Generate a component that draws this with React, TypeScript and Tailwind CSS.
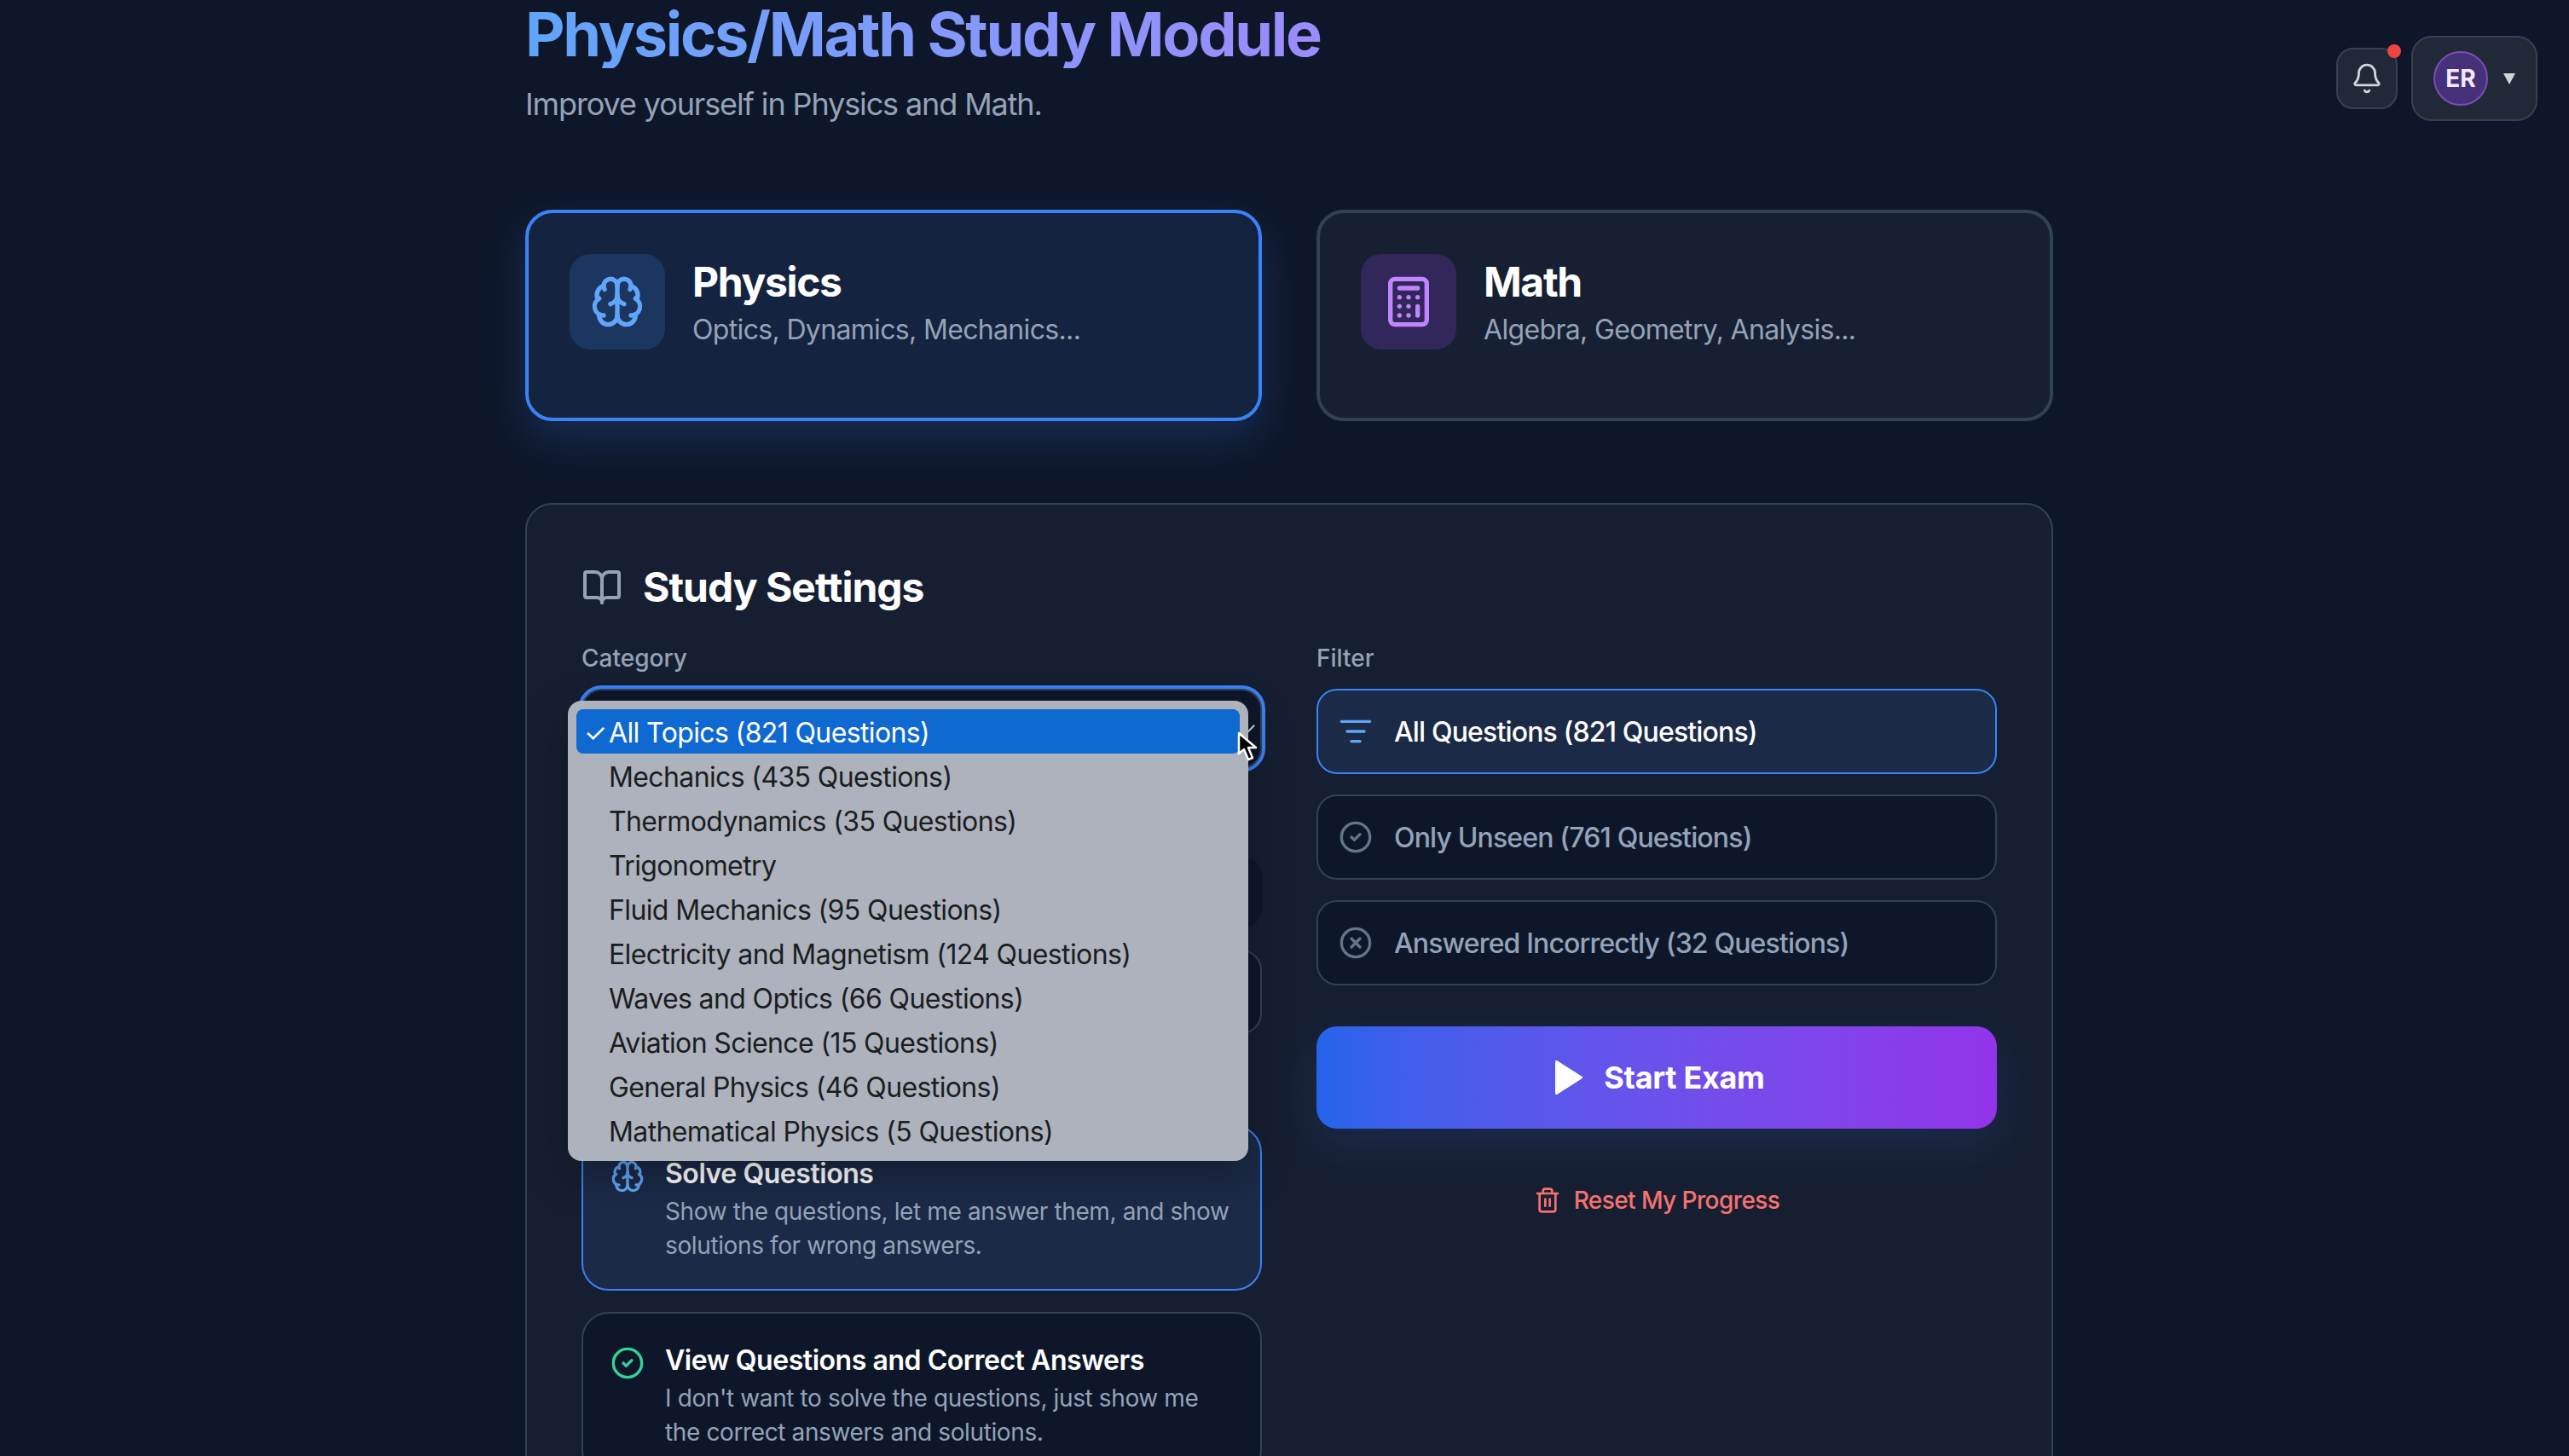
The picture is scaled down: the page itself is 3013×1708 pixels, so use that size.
import { Bell, Brain, BookOpen, Calculator, CircleCheck, CircleX, ListFilter, Trash2 } from "lucide-react";

const topics = [
  "All Topics (821 Questions)",
  "Mechanics (435 Questions)",
  "Thermodynamics (35 Questions)",
  "Trigonometry",
  "Fluid Mechanics (95 Questions)",
  "Electricity and Magnetism (124 Questions)",
  "Waves and Optics (66 Questions)",
  "Aviation Science (15 Questions)",
  "General Physics (46 Questions)",
  "Mathematical Physics (5 Questions)",
];

const filters = [
  { label: "All Questions (821 Questions)", icon: ListFilter, active: true },
  { label: "Only Unseen (761 Questions)", icon: CircleCheck, active: false },
  { label: "Answered Incorrectly (32 Questions)", icon: CircleX, active: false },
];

function SelectMenu() {
  return (
    <div className="absolute left-[-16px] top-[14px] z-20 w-[798px] rounded-[16px] bg-[#adb2bd] p-[10px] text-[32px] leading-[52px] tracking-[-0.62px] text-[#1c1d20] shadow-[0_16px_48px_rgba(0,0,0,0.3)]">
      {topics.map((topic, idx) => (
        <div
          key={topic}
          className={idx === 0 ? "relative h-[52px] rounded-[8px] bg-[#0f69d1] pl-[38px] pt-[2px] text-white" : "h-[52px] pl-[38px] pt-[2px]"}
        >
          {idx === 0 && <span className="absolute left-[9px] top-[2px] text-[30px]">✓</span>}
          {topic}
        </div>
      ))}
    </div>
  );
}

function Cursor() {
  return (
    <svg className="absolute left-[769px] top-[50px] z-30" width="26" height="36" viewBox="0 0 26 36">
      <path d="M2 2 L2 26 L8 21 L13 33 L18 31 L13 19 L22 19 Z" fill="#000" stroke="#fff" strokeWidth="2.5" strokeLinejoin="round" />
    </svg>
  );
}

export default function App() {
  return (
    <div className="relative h-screen overflow-hidden bg-[#0e172a] font-['Inter',sans-serif] text-white">
      <div className="absolute right-[37px] top-[42px] flex items-center gap-[16px]">
        <div className="relative flex h-[72px] w-[72px] items-center justify-center rounded-[20px] border-2 border-[#374151] bg-[#1f2937]">
          <Bell size={38} strokeWidth={1.8} className="text-[#d1d5db]" />
          <span className="absolute right-[-6px] top-[-6px] h-[16px] w-[16px] rounded-full bg-[#ef4444]" />
        </div>
        <div className="flex h-[100px] w-[148px] items-center gap-[18px] rounded-[24px] border-2 border-[#374151] bg-[#1f2937] pl-[24px]">
          <div className="flex h-[64px] w-[64px] items-center justify-center rounded-full border-2 border-[#7c4fb0] bg-[#45307a] text-[28px] font-bold text-[#f3e8ff]">
            ER
          </div>
          <span className="h-0 w-0 border-x-[7px] border-t-[13px] border-x-transparent border-t-[#d1d5db]" />
        </div>
      </div>

      <div className="ml-[616px] w-[1792px]">
        <h1 className="w-fit bg-gradient-to-r from-[#60a5fa] to-[#9b8cfb] bg-clip-text text-[72px] font-bold leading-[80px] tracking-[-2.3px] text-transparent">
          Physics/Math Study Module
        </h1>
        <p className="mt-[14px] text-[36px] leading-[56px] tracking-[-1.12px] text-[#94a3b8]">Improve yourself in Physics and Math.</p>

        <div className="mt-[96px] grid grid-cols-2 gap-[64px]">
          <div className="flex h-[248px] gap-[32px] rounded-[32px] border-4 border-[#3b82f6] bg-[#14233f] p-[48px] shadow-[0_20px_50px_rgba(59,130,246,0.2)]">
            <div className="flex h-[112px] w-[112px] items-center justify-center rounded-[24px] bg-[#1b365f]">
              <Brain size={64} className="text-[#60a5fa]" />
            </div>
            <div className="mt-[1px]">
              <p className="text-[48px] font-bold leading-[64px] tracking-[-1.35px]">Physics</p>
              <p className="text-[32px] leading-[48px] tracking-[-0.66px] text-[#94a3b8]">Optics, Dynamics, Mechanics...</p>
            </div>
          </div>
          <div className="flex h-[248px] gap-[32px] rounded-[32px] border-4 border-[#334155] bg-[#172033] p-[48px]">
            <div className="flex h-[112px] w-[112px] items-center justify-center rounded-[24px] bg-[#32275a]">
              <Calculator size={64} className="text-[#c084fc]" />
            </div>
            <div className="mt-[1px]">
              <p className="text-[48px] font-bold leading-[64px] tracking-[-1.35px]">Math</p>
              <p className="text-[32px] leading-[48px] tracking-[-0.66px] text-[#94a3b8]">Algebra, Geometry, Analysis...</p>
            </div>
          </div>
        </div>

        <section className="mt-[96px] rounded-[32px] border-2 border-[#334155] bg-[#161f32] p-[64px]">
          <div className="mt-[5px] flex items-center gap-[24px]">
            <BookOpen size={48} className="text-[#94a3b8]" />
            <h2 className="text-[48px] font-bold leading-[56px] tracking-[-1px]">Study Settings</h2>
          </div>
          <div className="mt-[35px] grid grid-cols-2 gap-[64px]">
            <div>
              <label className="block text-[28px] font-medium leading-[40px] text-[#94a3b8]">Category</label>
              <div className="relative mt-[16px]">
                <div className="h-[94px] rounded-[24px] border-2 border-[#334155] bg-[#0e172a] outline-4 outline-[#3b82f6]" />
                <span className="absolute left-[779px] top-[46px] h-[2px] w-[12px] -rotate-45 bg-[#d1d5db]" />
                <SelectMenu />
                <Cursor />
              </div>
              <div className="mt-[103px] h-[84px] rounded-[24px] bg-[#0e172a]" />
              <div className="mt-[25px] h-[99px] rounded-[24px] border-2 border-[#334155] bg-[#0e172a]" />
              <div className="mt-[107px] flex gap-[24px] rounded-[32px] border-2 border-[#3b82f6] bg-[#1b2a47] px-[32px] pb-[31px] pt-[33px]">
                <Brain size={40} className="mt-[5px] shrink-0 text-[#60a5fa]" />
                <div>
                  <p className="text-[32px] font-semibold leading-[44px] tracking-[-0.45px]">Solve Questions</p>
                  <p className="mt-[2px] text-[28px] leading-[40px] tracking-[-0.38px] text-[#94a3b8]">
                    Show the questions, let me answer them, and show solutions for wrong answers.
                  </p>
                </div>
              </div>
              <div className="mt-[25px] flex gap-[24px] rounded-[32px] border-2 border-[#334155] bg-[#0e172a] px-[32px] pb-[31px] pt-[33px]">
                <CircleCheck size={40} className="mt-[5px] shrink-0 text-[#34d399]" />
                <div>
                  <p className="text-[32px] font-semibold leading-[44px] tracking-[-0.45px]">View Questions and Correct Answers</p>
                  <p className="mt-[2px] text-[28px] leading-[40px] tracking-[-0.38px] text-[#94a3b8]">
                    I don't want to solve the questions, just show me the correct answers and solutions.
                  </p>
                </div>
              </div>
            </div>

            <div>
              <label className="block text-[28px] font-medium leading-[40px] text-[#94a3b8]">Filter</label>
              <div className="mt-[16px] flex flex-col gap-[24px]">
                {filters.map((f) => {
                  const Icon = f.icon;
                  return (
                    <div
                      key={f.label}
                      className={
                        f.active
                          ? "flex h-[100px] items-center gap-[25px] rounded-[24px] border-2 border-[#3b82f6] bg-[#1b2a47] px-[24px] text-[32px] font-medium tracking-[-0.85px] text-white"
                          : "flex h-[100px] items-center gap-[25px] rounded-[24px] border-2 border-[#334155] bg-[#0e172a] px-[24px] text-[32px] font-medium tracking-[-0.85px] text-[#94a3b8]"
                      }
                    >
                      <Icon size={40} className={f.active ? "text-[#60a5fa]" : "text-[#64748b]"} />
                      <span className="pt-[2px]">{f.label}</span>
                    </div>
                  );
                })}
              </div>
              <button
                type="button"
                className="mt-[48px] flex h-[120px] w-full items-center justify-center gap-[25px] rounded-[24px] bg-gradient-to-r from-[#2563eb] to-[#9333ea] pl-[8px] text-[36px] font-bold tracking-[-0.3px] shadow-[0_20px_50px_rgba(59,130,246,0.12)]"
              >
                <svg width="32" height="40" viewBox="0 0 32 40">
                  <path d="M1.5 1.5 L30.5 20 L1.5 38.5 Z" fill="white" stroke="white" strokeWidth="3" strokeLinejoin="round" />
                </svg>
                Start Exam
              </button>
              <div className="mt-[63px] flex items-center justify-center gap-[15px] text-[28px] font-medium tracking-[-0.58px] text-[#f87171]">
                <Trash2 size={32} />
                Reset My Progress
              </div>
            </div>
          </div>
        </section>
      </div>
    </div>
  );
}
